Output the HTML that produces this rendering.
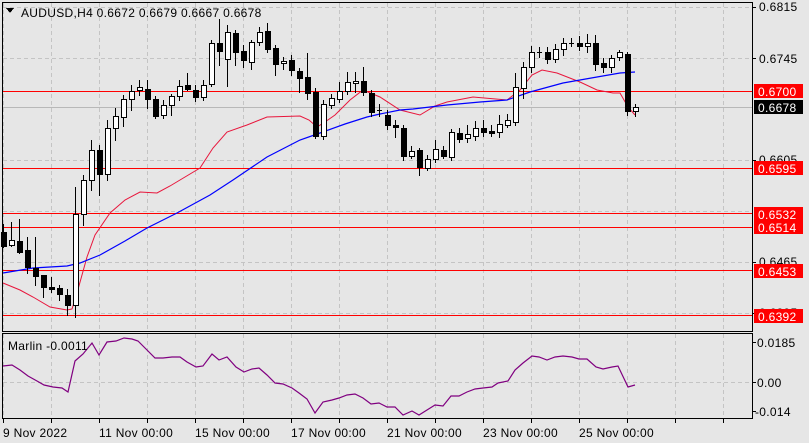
<!DOCTYPE html>
<html><head><meta charset="utf-8"><style>
html,body{margin:0;padding:0;background:#e6e6e6;}
body{width:809px;height:443px;overflow:hidden;}
svg{display:block;font-family:"Liberation Sans",sans-serif;font-size:12px;letter-spacing:0.3px;}
</style></head><body>
<svg id="s" width="809" height="443" xmlns="http://www.w3.org/2000/svg" shape-rendering="crispEdges">
<rect x="0" y="0" width="809" height="443" fill="#e6e6e6"/>
<g id="grid" stroke="#c4c4c4" stroke-dasharray="4,3" stroke-width="1"></g>
<g id="lev" stroke="#ff0000" stroke-width="1">
<line x1="2" x2="752" y1="91.5" y2="91.5"/>
<line x1="2" x2="752" y1="168.5" y2="168.5"/>
<line x1="2" x2="752" y1="213.5" y2="213.5"/>
<line x1="2" x2="752" y1="227.5" y2="227.5"/>
<line x1="2" x2="752" y1="270.5" y2="270.5"/>
<line x1="2" x2="752" y1="315.5" y2="315.5"/>
</g>
<line x1="2" x2="752" y1="107.5" y2="107.5" stroke="#b8b8b8"/>
<polyline id="red" fill="none" stroke="#e8163c" stroke-width="1" shape-rendering="auto"/>
<polyline id="blue" fill="none" stroke="#0000ff" stroke-width="1.2" shape-rendering="auto"/>
<g id="cdl"></g>
<polyline id="ind" fill="none" stroke="#800080" stroke-width="1.2" shape-rendering="auto"/>
<g fill="none" stroke="#000" stroke-width="1">
<rect x="2.5" y="2.5" width="750" height="329"/>
<rect x="2.5" y="333.5" width="750" height="85"/>
<line x1="752" x2="756" y1="7.5" y2="7.5"/><line x1="752" x2="756" y1="58.5" y2="58.5"/>
<line x1="752" x2="756" y1="160.5" y2="160.5"/><line x1="752" x2="756" y1="262.5" y2="262.5"/>
<line x1="752" x2="756" y1="313.5" y2="313.5"/>
<line x1="752" x2="756" y1="342.5" y2="342.5"/><line x1="752" x2="756" y1="382.5" y2="382.5"/><line x1="752" x2="756" y1="411.5" y2="411.5"/>
</g>
<g id="xt" stroke="#000"></g>
<g fill="#000">
<path d="M6 8 L14 8 L10 13 Z"/>
<text x="21" y="17">AUDUSD,H4  0.6672 0.6679 0.6667 0.6678</text>
<text x="8" y="350">Marlin -0.0011</text>
<text x="759" y="11">0.6815</text>
<text x="759" y="63">0.6745</text>
<text x="759" y="164">0.6605</text>
<text x="759" y="266">0.6465</text>
<text x="759" y="317">0.6395</text>
<text x="757" y="347">0.0185</text>
<text x="757" y="387">0.00</text>
<text x="755" y="416">-0.014</text>
<text x="3" y="437">9 Nov 2022</text>
<text x="99" y="437">11 Nov 00:00</text>
<text x="195" y="437">15 Nov 00:00</text>
<text x="291" y="437">17 Nov 00:00</text>
<text x="387" y="437">21 Nov 00:00</text>
<text x="483" y="437">23 Nov 00:00</text>
<text x="579" y="437">25 Nov 00:00</text>
</g>
<g id="lbl"></g>
</svg>
<script>
var NS="http://www.w3.org/2000/svg";
function el(p,t,a,txt){var e=document.createElementNS(NS,t);for(var k in a)e.setAttribute(k,a[k]);if(txt)e.textContent=txt;p.appendChild(e);return e;}
var g=document.getElementById('grid');
for(var x=3;x<752;x+=48){el(g,'line',{x1:x+.5,x2:x+.5,y1:3,y2:331});el(g,'line',{x1:x+.5,x2:x+.5,y1:334,y2:418});}
[7,58,160,211,262,313].forEach(function(y){el(g,'line',{x1:3,x2:752,y1:y+.5,y2:y+.5});});
el(g,'line',{x1:3,x2:752,y1:382.5,y2:382.5});
var xt=document.getElementById('xt');
for(var x=3;x<752;x+=48){el(xt,'line',{x1:x+.5,x2:x+.5,y1:419,y2:423});}
var C=[[232,246,224,247],[245,240,222,246],[241,252,219,253],[250,267,237,273],[268,276,237,285],[275,287,275,297],[287,289,277,292],[288,294,285,300],[295,305,289,315],[305,214,187,317],
[214,180,175,225],[180,150,140,190],[150,174,145,195],[174,128,120,180],[128,116,108,140],[117,99,95,126],[99,91,85,110],[90,87,80,95],[89,99,80,108],[99,116,96,118],
[115,105,100,118],[105,96,94,115],[96,86,80,100],[85,89,73,90],[90,97,85,101],[97,85,80,100],[84,43,40,86],[43,51,19,65],[59,32,25,86],[33,52,30,65],
[51,60,45,67],[62,42,40,69],[42,32,27,45],[31,49,23,52],[48,64,45,75],[63,61,57,69],[60,70,55,75],[71,78,68,92],[77,93,53,99],[92,136,88,138],
[136,104,100,139],[105,98,94,108],[99,91,82,102],[91,82,72,94],[83,81,72,92],[81,92,67,95],[93,112,90,116],[110,110,104,116],[115,125,110,129],[125,127,120,137],
[128,156,125,160],[156,151,146,158],[150,167,148,175],[168,159,155,170],[159,149,140,162],[150,156,146,158],[157,132,129,160],[133,139,128,142],[138,134,125,142],[136,128,121,140],
[128,132,120,136],[131,133,125,136],[132,124,115,137],[125,120,114,127],[122,87,73,125],[88,67,62,98],[67,52,46,72],[52,52,47,57],[52,59,47,63],[59,49,44,62],
[49,43,38,55],[43,43,38,46],[43,46,36,50],[46,43,34,52],[43,64,35,70],[63,67,58,72],[67,58,55,72],[57,52,50,60],[54,111,52,115],[111,107,104,116]];
var cg=document.getElementById('cdl');
C.forEach(function(c,i){var x=3+8*i,o=c[0],cl=c[1],h=c[2],l=c[3];
el(cg,'line',{x1:x+.5,x2:x+.5,y1:h,y2:l+1,stroke:'#000'});
var t=Math.min(o,cl),b=Math.max(o,cl);
if(b-t<1){el(cg,'line',{x1:x-2,x2:x+3,y1:t+.5,y2:t+.5,stroke:'#000'});}
else el(cg,'rect',{x:x-1.5,y:t+.5,width:5,height:b-t,fill:cl>o?'#000':'#fff',stroke:'#000'});
});
document.getElementById('red').setAttribute('points',"3,283 20,290 33,297 50,307 67,310 72,309 77,293 87,257 95,235 110,213 125,200 140,192 157,193 170,186 180,180 200,168 213,148 227,132 247,125 267,117 300,116 309,120 317,127 325,122 335,115 350,100 363,90 380,97 400,110 420,115 435,106 447,102 473,97 507,100 520,90 532,75 542,70 557,73 580,82 597,90 613,93 620,93 628,107 635,115");
document.getElementById('blue').setAttribute('points',"3,273 33,268 67,266 80,263 100,255 125,241 147,228 177,213 210,195 233,180 267,157 300,140 320,133 345,124 367,117 380,114 400,110 413,109 447,105 480,102 507,100 530,92 563,83 597,77 620,73 635,72");
document.getElementById('ind').setAttribute('points',"3,366 12,365 20,370 28,376 37,381 44,385 53,387 62,388 68,392 75,361 83,354 92,343 99,355 107,342 116,341 124,338 132,339 138,341 147,350 155,358 163,358 172,357 180,357 187,362 196,367 203,366 212,354 219,360 227,357 236,367 244,372 252,369 259,368 267,375 275,383 283,384 292,388 299,393 307,399 315,413 323,402 332,400 339,398 347,395 355,394 363,398 371,404 379,403 387,407 395,407 403,415 412,411 419,415 427,410 435,405 443,406 451,396 459,396 467,392 475,389 483,388 492,387 498,383 508,381 515,370 523,363 532,356 539,357 547,360 555,357 563,356 572,357 579,359 587,359 596,367 603,369 612,367 618,366 628,387 635,385");
var L=[[91,'0.6700','#ff0000'],[107,'0.6678','#000'],[168,'0.6595','#ff0000'],[214,'0.6532','#ff0000'],[227,'0.6514','#ff0000'],[271,'0.6453','#ff0000'],[316,'0.6392','#ff0000']];
var lg=document.getElementById('lbl');
L.forEach(function(a){el(lg,'rect',{x:754,y:a[0]-7,width:49,height:14,fill:a[2]});el(lg,'text',{x:758,y:a[0]+5,fill:'#fff'},a[1]);});
</script>
</body></html>
